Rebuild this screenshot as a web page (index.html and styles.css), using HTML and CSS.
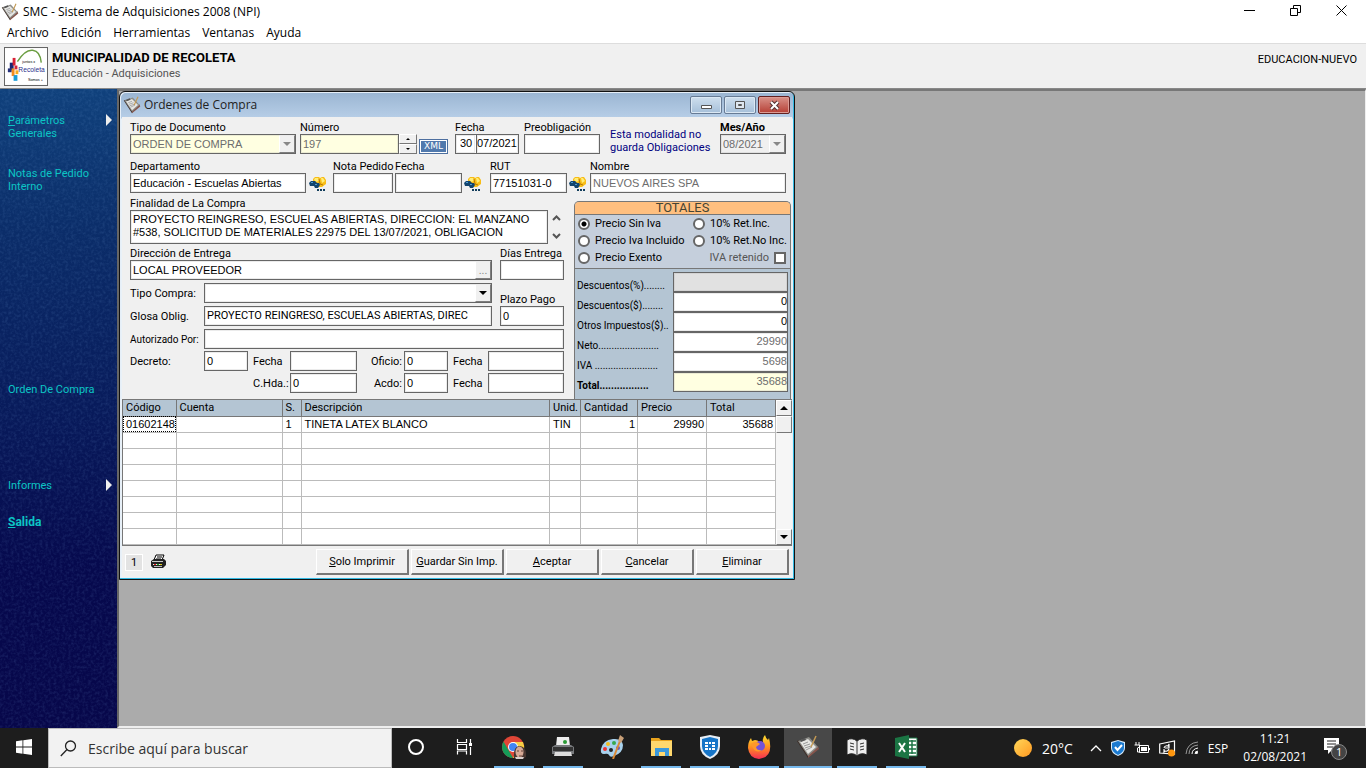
FILE: index.html
```html
<!DOCTYPE html>
<html lang="es">
<head>
<meta charset="utf-8">
<title>SMC - Sistema de Adquisiciones 2008 (NPI)</title>
<link rel="stylesheet" href="styles.css">
</head>
<body>
<svg class="defs" width="0" height="0" aria-hidden="true">
  <defs>
    <linearGradient id="sun" x1="0" y1="0" x2="1" y2="1"><stop offset="0" stop-color="#ffd75a"/><stop offset="1" stop-color="#ff9820"/></linearGradient>
    <linearGradient id="fire" x1="0" y1="0" x2="0" y2="1"><stop offset="0" stop-color="#ffe030"/><stop offset=".5" stop-color="#ff9020"/><stop offset="1" stop-color="#f52c55"/></linearGradient>
    <symbol id="clip" viewBox="0 0 24 24">
      <path d="m1 6 3-1 9 15-1 3z" fill="#3b2c26"/><path d="m12 23 11-9-1-3-10 9z" fill="#85544b"/><path d="M2 6 13 2l9 10-10 9z" fill="#8d8d88"/><path d="M4 7 12 4l8 8-8 7z" fill="#e6e6e3"/>
      <path d="m7 9 5-2m-4 4 6-2m-5 4 6-2m-5 4 6-3" stroke="#999" fill="none"/><path d="m4 5 5-2 1 2-5 2z" fill="#555"/><path d="m20 1-5 11" stroke="#c49a54" stroke-width="1.500"/>
    </symbol>
    <symbol id="find" viewBox="0 0 17 15">
      <path d="M4 3 6 1h4l1 1 2-1h2l2 3v4l-4 3H9L4 6z" fill="#f8bd16"/><path d="M6 2h3l1 2-2 2-3-2zM12 2h2l2 3-3 2z" fill="#ffed78"/><path d="m10 3 1 5 3 1" stroke="#b97903" fill="none"/>
      <path d="M0 7 2 5h4l2 2 2 0 1 2-2 3H6L5 10H1z" fill="#13446d"/><path d="M2 6h2v1H2zm4 2h2v1H6z" fill="#4b9bd0"/><path d="M8 13h2v2H8zm3 0h2v2h-2zm3 0h2v2h-2z" fill="#123d5b"/>
    </symbol>
  </defs>
</svg>
<div class="app">
  <header class="titlebar">
    <svg class="ico18"><use href="#clip"/></svg>
    <h1>SMC - Sistema de Adquisiciones 2008 (NPI)</h1>
    <div class="sysbtns">
      <button aria-label="Minimizar"><svg width="11" height="11"><path d="M0 5.500h11" stroke="#000"/></svg></button>
      <button aria-label="Restaurar"><svg width="11" height="11"><path d="M.5 3.500h7v7h-7zM3.500 3V.5h7v7H8" fill="none" stroke="#000"/></svg></button>
      <button aria-label="Cerrar"><svg width="11" height="11"><path d="m.5.5 10 10m0-10-10 10" stroke="#000"/></svg></button>
    </div>
  </header>
  <nav class="menubar"><a href="#">Archivo</a><a href="#">Edición</a><a href="#">Herramientas</a><a href="#">Ventanas</a><a href="#">Ayuda</a></nav>
  <div class="banner">
    <svg class="logo" viewBox="0 0 44 38" role="img" aria-label="Recoleta">
      <path d="M0 0h44v38H0z" fill="#fff"/><path d="M13 14Q21 1 29 2t9 13" fill="none" stroke="#6b9e42" stroke-width="1.500"/>
      <path d="M5 15h4v8H5z" fill="#1b2473"/><path d="M8 10h3v8H8z" fill="#d82135"/><path d="M3 21h4v4H3z" fill="#26327c"/><path d="M7 21h3v8H7z" fill="#f28b1f"/><path d="M10 18h3v4h-3z" fill="#d7243b"/><path d="M9 28h4v6H9z" fill="#199bd7"/><path d="M11 23h3v4h-3z" fill="#f5ac20"/>
      <text x="18" y="15" font-size="4">juntos x</text><text x="14" y="25" font-size="7" class="logo-name">Recoleta</text><text x="24" y="34" font-size="4">Somos +</text>
    </svg>
    <div class="org"><strong>MUNICIPALIDAD DE RECOLETA</strong><span>Educación - Adquisiciones</span></div>
    <span class="user">EDUCACION-NUEVO</span>
  </div>
  <main class="workspace">
    <nav class="side">
      <svg class="grain" aria-hidden="true"><filter id="noise"><feTurbulence type="fractalNoise" baseFrequency=".35" numOctaves="2" seed="4"/><feColorMatrix values="0 0 0 0 .2  0 0 0 0 .4  0 0 0 0 .75  1.500 0 0 0 -.6"/></filter><rect width="100%" height="100%" filter="url(#noise)"/></svg>
      <a href="#" class="s1"><span><u>P</u>arámetros<br>Generales</span><i class="tri"></i></a>
      <a href="#" class="s2">Notas de Pedido<br>Interno</a>
      <a href="#" class="s3">Orden De Compra</a>
      <a href="#" class="s4"><span>Informes</span><i class="tri"></i></a>
      <a href="#" class="s5"><u>S</u>alida</a>
    </nav>
    <div class="mdi">
      <section class="win">
        <header class="wtitle">
          <svg class="ico18"><use href="#clip"/></svg><h2>Ordenes de Compra</h2>
          <button aria-label="Minimizar ventana"><svg width="13" height="11"><path d="M1.500 5.500h10v3h-10z" fill="#fff" stroke="#555"/></svg></button>
          <button aria-label="Maximizar ventana"><svg width="13" height="11"><path d="M1.500 1.500h9v7h-9z" fill="#dfe7ef" stroke="#555"/><path d="M4.500 4.500h3v1h-3z" fill="none" stroke="#555"/></svg></button>
          <button class="close" aria-label="Cerrar ventana"><svg width="13" height="11"><path d="m3 2 7 7m0-7-7 7" stroke="#533" stroke-width="4"/><path d="m3 2 7 7m0-7-7 7" stroke="#fff" stroke-width="2"/></svg></button>
        </header>
        <form class="form">
          <div class="row r1">
            <div class="f w166"><label for="tipo">Tipo de Documento</label><div class="combo cream"><select id="tipo" disabled><option>ORDEN DE COMPRA</option></select><i class="drop"></i></div></div>
            <div class="f w117"><label for="num">Número</label><div class="spin"><input id="num" class="box cream dim" value="197"><div class="spinb"><button type="button" aria-label="Subir"><i class="up"></i></button><button type="button" aria-label="Bajar"><i class="dn"></i></button></div></div></div>
            <button type="button" class="xml">XML</button>
            <div class="f w64"><label for="dia">Fecha</label><div class="date"><input id="dia" class="box" value="30" aria-label="Día"><input class="box" value="07/2021" aria-label="Mes y año"></div></div>
            <div class="f w76"><label for="pre">Preobligación</label><input id="pre" class="box"></div>
            <p class="note">Esta modalidad no<br>guarda Obligaciones</p>
            <div class="f w66"><label for="mes" class="bold">Mes/Año</label><div class="combo gray"><select id="mes" disabled><option>08/2021</option></select><i class="drop"></i></div></div>
          </div>
          <div class="row r2">
            <div class="f w177"><label for="dep">Departamento</label><input id="dep" class="box" value="Educación - Escuelas Abiertas"></div>
            <button type="button" class="find" aria-label="Buscar departamento"><svg><use href="#find"/></svg></button>
            <div class="f w60"><label for="nota">Nota Pedido</label><input id="nota" class="box"></div>
            <div class="f w68"><label for="fnota">Fecha</label><input id="fnota" class="box"></div>
            <button type="button" class="find" aria-label="Buscar nota"><svg><use href="#find"/></svg></button>
            <div class="f w78"><label for="rut">RUT</label><input id="rut" class="box" value="77151031-0"></div>
            <button type="button" class="find" aria-label="Buscar proveedor"><svg><use href="#find"/></svg></button>
            <div class="f grow"><label for="nom">Nombre</label><input id="nom" class="box dim" value="NUEVOS AIRES SPA"></div>
          </div>
          <div class="split">
            <div class="left">
              <div class="f"><label for="fin">Finalidad de La Compra</label><div class="memo"><textarea id="fin" class="box">PROYECTO REINGRESO, ESCUELAS ABIERTAS, DIRECCION: EL MANZANO
#538, SOLICITUD DE MATERIALES 22975 DEL 13/07/2021, OBLIGACION</textarea><div class="memosb"><svg width="9" height="6"><path d="m1 5 3.500-3.500L8 5" fill="none" stroke="#555" stroke-width="2"/></svg><svg width="9" height="6"><path d="m1 1 3.500 3.500L8 1" fill="none" stroke="#555" stroke-width="2"/></svg></div></div></div>
              <div class="row r3">
                <div class="f w362"><label for="dir">Dirección de Entrega</label><div class="combo"><input id="dir" value="LOCAL PROVEEDOR"><button type="button" class="dots" aria-label="Elegir dirección">...</button></div></div>
                <div class="f w64"><label for="dias">Días Entrega</label><input id="dias" class="box"></div>
              </div>
              <div class="row r4">
                <div class="two">
                  <label for="tc">Tipo Compra:</label><div class="combo"><select id="tc"><option></option></select><i class="drop on"></i></div>
                  <label for="glosa">Glosa Oblig.</label><input id="glosa" class="box narrow" value="PROYECTO REINGRESO, ESCUELAS ABIERTAS, DIREC">
                </div>
                <div class="f w64"><label for="plazo">Plazo Pago</label><input id="plazo" class="box" value="0"></div>
              </div>
              <div class="codes">
                <label for="aut" class="tight">Autorizado Por:</label><input id="aut" class="box all">
                <label for="dec">Decreto:</label><input id="dec" class="box" value="0"><label for="fd" class="in">Fecha</label><input id="fd" class="box"><label for="of" class="end">Oficio:</label><input id="of" class="box" value="0"><label for="fo" class="in">Fecha</label><input id="fo" class="box">
                <label for="ch" class="in third">C.Hda.:</label><input id="ch" class="box" value="0"><label for="ac" class="end">Acdo:</label><input id="ac" class="box" value="0"><label for="fa" class="in">Fecha</label><input id="fa" class="box">
              </div>
            </div>
            <div class="totals">
              <h3>TOTALES</h3>
              <div class="opts">
                <label><input type="radio" name="p" checked>Precio Sin Iva</label><label><input type="radio" name="p">10% Ret.Inc.</label>
                <label><input type="radio" name="p">Precio Iva Incluido</label><label><input type="radio" name="p">10% Ret.No Inc.</label>
                <label><input type="radio" name="p">Precio Exento</label><label class="chk">IVA retenido<input type="checkbox"></label>
              </div>
              <div class="sums">
                <label for="t1">Descuentos(%)........</label><input id="t1" class="box off" disabled>
                <label for="t2">Descuentos($)........</label><input id="t2" class="box" value="0">
                <label for="t3">Otros Impuestos($)..</label><input id="t3" class="box" value="0">
                <label for="t4">Neto.......................</label><input id="t4" class="box dim" value="29990">
                <label for="t5">IVA ........................</label><input id="t5" class="box dim" value="5698">
                <label for="t6" class="bold">Total.................</label><input id="t6" class="box dim cream" value="35688">
              </div>
            </div>
          </div>
          <div class="gridwrap">
            <table>
              <colgroup><col class="c1"><col class="c2"><col class="c3"><col><col class="c5"><col class="c6"><col class="c7"><col class="c8"></colgroup>
              <thead><tr><th>Código</th><th>Cuenta</th><th>S.</th><th>Descripción</th><th>Unid.</th><th>Cantidad</th><th>Precio</th><th>Total</th></tr></thead>
              <tbody>
                <tr><td class="focus">01602148</td><td></td><td>1</td><td>TINETA LATEX BLANCO</td><td>TIN</td><td class="n">1</td><td class="n">29990</td><td class="n">35688</td></tr>
                <tr><td></td><td></td><td></td><td></td><td></td><td></td><td></td><td></td></tr>
                <tr><td></td><td></td><td></td><td></td><td></td><td></td><td></td><td></td></tr>
                <tr><td></td><td></td><td></td><td></td><td></td><td></td><td></td><td></td></tr>
                <tr><td></td><td></td><td></td><td></td><td></td><td></td><td></td><td></td></tr>
                <tr><td></td><td></td><td></td><td></td><td></td><td></td><td></td><td></td></tr>
                <tr><td></td><td></td><td></td><td></td><td></td><td></td><td></td><td></td></tr>
                <tr><td></td><td></td><td></td><td></td><td></td><td></td><td></td><td></td></tr>
              </tbody>
            </table>
            <div class="vsb"><button type="button" aria-label="Subir lista"><i class="up"></i></button><i class="thumb"></i><button type="button" aria-label="Bajar lista"><i class="dn"></i></button></div>
          </div>
          <footer class="actions">
            <span class="count">1</span>
            <svg class="printer" width="17" height="16"><path d="M4 6 6 1h8l-2 5" fill="#fff" stroke="#000"/><path d="M7 3h5M6 5h5" stroke="#000"/><path d="M1 7 4 5h10l2 2v4l-3 3H3l-2-2z" fill="#222"/><path d="M2 7.500h11" stroke="#ccc"/><path d="M3 10.500h9" stroke="#eee"/><path d="M4 10h2v1H4z" fill="#d22"/><path d="M7 10h2v1H7z" fill="#2a2"/><path d="M10 10h2v1h-2z" fill="#dc2"/><path d="M4 12.500h8" stroke="#bbb"/></svg>
            <button type="button"><u>S</u>olo Imprimir</button><button type="button"><u>G</u>uardar Sin Imp.</button><button type="button"><u>A</u>ceptar</button><button type="button"><u>C</u>ancelar</button><button type="button"><u>E</u>liminar</button>
          </footer>
        </form>
      </section>
    </div>
  </main>
  <footer class="taskbar">
    <button class="start" aria-label="Inicio"><svg width="16" height="16"><path d="M0 2.200 6.500 1.300V7.600H0zM7.300 1.200 16 0v7.600H7.300zM0 8.400h6.500v6.300L0 13.800zM7.300 8.400H16V16l-8.700-1.200z" fill="#fff"/></svg></button>
    <label class="search"><svg width="17" height="17"><circle cx="10.500" cy="6" r="5" fill="none" stroke="#222" stroke-width="1.300"/><path d="M7 9.500.8 16" stroke="#222" stroke-width="1.300"/></svg><input type="text" placeholder="Escribe aquí para buscar" aria-label="Buscar"></label>
    <div class="apps">
      <button aria-label="Cortana"><svg viewBox="0 0 24 24"><circle cx="12" cy="12" r="7" fill="none" stroke="#fff" stroke-width="2"/></svg></button>
      <button aria-label="Vista de tareas"><svg viewBox="0 0 24 24"><path d="M4.500 4v3.500h9V4M4.500 19.500V16h9v3.500M4.500 9.500h9v5h-9zM17.500 4v4m0 4v8" fill="none" stroke="#fff" stroke-width="1.200"/><path d="M16 8h3v3h-3z" fill="#fff"/></svg></button>
      <button class="run" aria-label="Chrome"><svg viewBox="0 0 24 24"><circle cx="11" cy="12" r="11" fill="#e04637"/><path d="M1.500 6.500 11 23A11 11 0 0 1 1.500 6.500z" fill="#159b58"/><path d="M11 23 17 10h5a11 11 0 0 1-11 13z" fill="#fc3"/><path d="M11 7h10l1 4H11z" fill="#f8ce45"/><circle cx="11" cy="12" r="5" fill="#fff"/><circle cx="11" cy="12" r="4" fill="#4285f4"/><path d="M12 23q-1-12 6-12 7 1 6 11l-3 2h-6z" fill="#46352f"/><ellipse cx="17.500" cy="17" rx="4" ry="5.500" fill="#d7aa96"/><path d="M15 16h2m2 0h2m-4 5h3" stroke="#65443c"/><path d="M13 22h9l-1 2h-7z" fill="#d8d0cd"/></svg></button>
      <button class="run" aria-label="Impresora"><svg viewBox="0 0 24 24"><path d="M6 2h12l1 9H5z" fill="#eee"/><path d="m1 12 3-2h16l3 2v7H1z" fill="#77797c"/><path d="M2 12h20v4H2z" fill="#333"/><path d="M4 17h16l1 4H3z" fill="#ddd"/><circle cx="14" cy="7" r="2" fill="#2a9a34"/></svg></button>
      <button aria-label="Paint"><svg viewBox="0 0 24 24"><path d="M1 14Q3 5 13 4q9-1 10 6 0 8-9 11-4 2-5-1-1-2-5-1-4 0-3-5z" fill="#a8d1ed"/><circle cx="5" cy="14" r="2" fill="#e33"/><circle cx="8" cy="9" r="2" fill="#f4bd20"/><circle cx="14" cy="8" r="2" fill="#38a94d"/><circle cx="11" cy="15" r="2" fill="#222"/><circle cx="18" cy="13" r="2" fill="#6c55b4"/><path d="m20 6-7 18" stroke="#d98936" stroke-width="2"/><path d="m18 6 2-6 4 3-3 5z" fill="#c9a078"/></svg></button>
      <button class="run" aria-label="Explorador"><svg viewBox="0 0 24 24"><path d="M2 3h8l2 2h11v16H2z" fill="#e9a31d"/><path d="M2 6h21v15H2z" fill="#ffd86e"/><path d="M6 21v-8h14v8h-4v-4h-6v4z" fill="#3c99db"/></svg></button>
      <button class="run" aria-label="FortiClient"><svg viewBox="0 0 24 24"><path d="M2 2 12 0l10 2v9q0 9-10 13Q2 20 2 11z" fill="#e7eef5"/><path d="m4 4 8-2 8 2v7q0 7-8 11-8-4-8-11z" fill="#1675c8"/><path d="M7 7h3v2H7zm4 0h2v2h-2zm3 0h3v2h-3zM7 10h3v2H7zm7 0h3v2h-3zM7 13h3v2H7zm4 0h2v2h-2zm3 0h3v2h-3z" fill="#fff"/></svg></button>
      <button class="run" aria-label="Firefox"><svg viewBox="0 0 24 24"><path d="M1 13Q1 7 4 3l1 3 3-1q3 0 4 2h4q-1-4 2-7 1 4 3 5l1-2q5 19-10 21Q2 23 1 13z" fill="url(#fire)"/><circle cx="13" cy="11" r="5" fill="#7552d7"/><path d="M4 9q5-4 9 0l-4 3q1 4 6 3-7 5-11-6z" fill="#ff982a"/></svg></button>
      <button class="run active" aria-label="SMC"><svg viewBox="0 0 24 24"><use href="#clip"/></svg></button>
      <button class="run" aria-label="Libro"><svg viewBox="0 0 24 24"><path d="M2 5q5-3 10 1 5-4 10-1v15q-6-3-10 1-4-4-10-1z" fill="#eee" stroke="#222"/><path d="M12 6v14M5 8l4 1M5 11l4 1m-4 2 4 1m6-6 4-1m-4 4 4-1m-4 4 4-1" stroke="#333"/></svg></button>
      <button class="run" aria-label="Excel"><svg viewBox="0 0 24 24"><path d="M12 3h11v18H12z" fill="#fff" stroke="#1b7544"/><path d="M14 6h8m-8 4h8m-8 4h8m-8 4h8m-4-13v14" stroke="#1b7544" stroke-width="1.500"/><path d="m1 3 14-3v24L1 21z" fill="#1b7544"/><path d="m5 8 6 9m0-9-6 9" stroke="#fff" stroke-width="2"/></svg></button>
    </div>
    <div class="tray">
      <svg width="19" height="19"><circle cx="9" cy="9" r="9" fill="url(#sun)"/></svg><span class="temp">20°C</span>
      <svg width="12" height="8"><path d="m1 7 5-5 5 5" fill="none" stroke="#fff" stroke-width="1.300"/></svg>
      <svg width="14" height="16"><path d="m0 2 7-2 7 2v6q0 5-7 8-7-3-7-8z" fill="#d9ecfb"/><path d="m1 3 6-2 6 2v5q0 4-6 7-6-3-6-7z" fill="#1b7ad0"/><path d="m4 7 2.500 3L11 5" fill="none" stroke="#fff" stroke-width="2"/></svg>
      <svg width="16" height="14"><path d="M5.500 4.500h9v7h-9zM2 1v3m3-3v3M.5 4h5v2l-2 1v4h2" fill="none" stroke="#fff"/><path d="M7 6h6v4H7zM15 7h1v2h-1z" fill="#fff"/></svg>
      <svg width="17" height="17"><path d="M.7 4 15.500 1v13L.7 13z" fill="none" stroke="#fff" stroke-width="1.200"/><path d="M5 8q1-3 4-2l1-2v4H6m4 1q-1 3-4 2l-1 1V9" fill="none" stroke="#fff" stroke-width="1.200"/><circle cx="12.500" cy="13" r="3.500" fill="#ff960e"/></svg>
      <svg width="14" height="14"><g fill="none" stroke="#999"><path d="M1 13Q2 2 13 1M4 13q0-8 9-9"/><path d="M7 13q0-5 6-6m-3 6q0-2 3-3" stroke="#fff"/></g><circle cx="11.500" cy="11.500" r="1.500" fill="#fff"/></svg>
      <span class="lang">ESP</span><span class="clock">11:21<br>02/08/2021</span>
      <svg width="26" height="26"><path d="M1 3h15v12H9l-4 4v-4H1z" fill="#fff"/><path d="M4 6h9M4 9h9M4 12h6" stroke="#222"/><circle cx="16" cy="17" r="7.500" fill="#444" stroke="#888"/><text x="13" y="21" fill="#fff" font-size="11">1</text></svg>
    </div>
  </footer>
</div>
</body>
</html>
```
FILE: styles.css
```css
* { box-sizing: border-box; }
body { margin: 0; font: 11px/13px Roboto, "Liberation Sans", sans-serif; color: #000; }
button, input, select, textarea { font: inherit; color: inherit; margin: 0; padding: 0; border: 0; border-radius: 0; background: none; min-width: 0; }
.form input, .form select, .form textarea, .form td { font-family: "Liberation Sans", sans-serif; }
.form .narrow { font-family: Roboto, sans-serif; }
h1, h2, h3, p { margin: 0; font-weight: normal; }
a { color: inherit; text-decoration: none; }
.defs { position: absolute; }
.app { display: flex; flex-direction: column; height: 100vh; min-height: 640px; background: #fff; }
.ico18 { width: 18px; height: 18px; flex: none; }

.titlebar { display: flex; align-items: center; height: 23px; padding: 0 2px 0 1px; gap: 4px; }
.titlebar h1, .wtitle h2 { flex: 1; font: 12px/16px "Open Sans", sans-serif; }
.sysbtns { display: flex; }
.sysbtns button { width: 46px; height: 20px; }
.menubar { display: flex; gap: 12px; height: 20px; padding: 2px 7px; font: 12px/16px "Open Sans", sans-serif; }
.banner { display: flex; align-items: flex-start; height: 46px; padding: 3px 9px 2px 4px; gap: 4px; background: #f0f0f0; border-bottom: 1px solid #888; border-top: 1px solid #ddd; }
.logo { width: 44px; height: 39px; border: 1px solid #666; flex: none; font-family: "Liberation Sans", sans-serif; }
.logo-name { fill: #2b2f8c; }
.org { flex: 1; display: flex; flex-direction: column; line-height: 16px; padding-top: 3px; color: #555; }
.org strong { font-size: 13px; color: #000; }
.user { padding-top: 6px; }

.workspace { flex: 1; display: flex; min-height: 0; }
.side { position: relative; width: 117px; flex: none; padding: 25px 5px 0 8px; color: #0cc5c5; background: linear-gradient(#10417c, #0b2d69 22%, #081c5c 48%, #06094d 75%, #07074a); }
.grain { position: absolute; inset: 0; width: 100%; height: 100%; opacity: .2; }
.side a { position: relative; display: flex; justify-content: space-between; align-items: flex-start; }
.side .s2 { margin-top: 27px; }
.side .s3 { margin-top: 190px; }
.side .s4 { margin-top: 83px; }
.side .s5 { margin-top: 24px; display: block; font-weight: bold; font-size: 12px; }
.tri { width: 0; height: 0; border: 6px solid transparent; border-left-color: #eee; border-right: 0; }
.mdi { position: relative; flex: 1; background: #ababab; border-left: 2px solid #666; border-top: 2px solid #777; border-bottom: 2px solid #eee; border-right: 1px solid #eee; }

.win { position: absolute; left: 0; top: 0; width: 676px; padding: 1px 2px 2px; background: linear-gradient(#9ab5d2, #b7cee7 26px, #e9f1f8 27px); border: 1px solid #111; border-radius: 6px 6px 0 0; box-shadow: inset -1px -1px #32b8e0, inset 1px 1px #e5eef7; }
.wtitle { display: flex; align-items: center; height: 24px; padding: 0 2px 0 1px; gap: 3px; color: #222; }
.wtitle button { width: 32px; height: 18px; border: 1px solid #677b95; border-radius: 2px; background: linear-gradient(#cfdfee, #a5bfd9); box-shadow: inset 0 0 0 1px #dbe8f4; display: grid; place-items: center; }
.wtitle button + button { margin-left: -1px; }
.wtitle .close { background: linear-gradient(#d99289, #b63f35); border-color: #632020; box-shadow: inset 0 0 0 1px #dc9b94; }
.form { background: #f0f0f0; padding-top: 4px; }

.f { display: flex; flex-direction: column; }
.f > label { height: 13px; white-space: nowrap; }
.box, .combo { height: 20px; border: 1px solid #666; outline: 1px solid #9993; outline-offset: -2px; background: #fff; }
.box { padding: 0 2px 1px; width: 100%; }
.combo { display: flex; }
.combo select, .combo input { flex: 1; padding: 0 2px; appearance: none; opacity: 1; }
.combo select:disabled, .dim { color: #6d6d6d; }
.cream { background: #ffffe1; }
.gray { background: #f0f0f0; }
.off { background: #e1e1e1; }
.bold { font-weight: bold; }
.drop, .dots, .spinb button, .vsb button, .thumb { display: grid; place-items: center; background: #f0f0f0; border: 1px solid; border-color: #fff #777 #777 #fff; }
.drop, .dots { width: 16px; color: #888; }
.drop::after, .dn::after, .up::after { content: ""; border: 4px solid transparent; border-top-color: currentColor; border-bottom: 0; }
.up::after { border: 4px solid transparent; border-bottom-color: currentColor; border-top: 0; }
.up, .dn { display: grid; }
.on { color: #000; }
.spin { display: flex; }
.spinb { width: 18px; flex: none; display: flex; flex-direction: column; }
.spinb button { height: 10px; }
.spinb i::after { border-width: 2px; border-top-width: 0; }
.spinb .dn::after { border-width: 2px 2px 0; }
.row { display: flex; align-items: flex-end; }
.r1 { padding: 0 6px 0 8px; height: 33px; }
.w166 { width: 166px; margin-right: 4px; }
.w117 { width: 117px; margin-right: 2px; }
.xml { width: 29px; height: 15px; margin-right: 7px; border: 1px solid #4d6f9f; outline: 1px solid #fff; outline-offset: -2px; background: #5079ad; color: #fff; font: 9px/11px "DejaVu Sans", sans-serif; }
.w64 { width: 64px; }
.r1 .w64 { margin-right: 5px; }
.date { display: grid; grid-template-columns: 21px 1fr; }
.date .box { padding: 0 0 2px; }
.date .box:first-child { padding-left: 4px; border-right: 0; }
.w76 { width: 76px; margin-right: 10px; }
.note { color: #000080; flex: 1; }
.w66 { width: 66px; }
.r2 { padding: 0 6px 0 8px; margin-top: 6px; }
.w177 { width: 176px; }
.find { width: 17px; height: 20px; margin: 0 7px 0 3px; }
.find svg { width: 17px; height: 15px; display: block; }
.w60 { width: 60px; margin-right: 2px; }
.w68 { width: 67px; }
.w68 + .find { margin: 0 9px 0 2px; }
.w78 { width: 77px; }
.w78 + .find { margin: 0 4px 0 2px; }
.grow { flex: 1; }
.split { display: grid; grid-template-columns: 452px 1fr; }
.left { padding: 4px 10px 6px 8px; }
.memo { display: flex; }
.memo .box { width: 418px; flex: none; height: 34px; resize: none; overflow: hidden; white-space: pre; display: block; padding: 2px; }
.memosb { display: flex; flex-direction: column; justify-content: space-between; padding: 5px 4px; }
.r3, .r4 { justify-content: space-between; }
.r3 { margin-top: 3px; }
.w362 { width: 362px; }
.r4 { margin-top: 3px; }
.two { display: grid; grid-template-columns: 74px 288px; row-gap: 3px; align-items: center; }
.codes { margin-top: 3px; display: grid; grid-template-columns: 74px 44px 42px 67px 47px 44px 40px 1fr; row-gap: 2px; align-items: center; }
.codes label { white-space: nowrap; }
.codes .tight { font-size: 10px; }
.all { grid-column: 2 / -1; }
.third { grid-column: 3; }
.in { padding-left: 5px; }
.end { text-align: right; padding-right: 2px; }

.totals { margin: 8px 1px 0 0; border: 1px solid #777; border-bottom: 0; border-radius: 5px 5px 0 0; background: #b4c5d3; display: flex; flex-direction: column; overflow: hidden; }
.totals h3 { background: #ffbf7f; border-bottom: 1px solid #777; text-align: center; line-height: 12px; color: #443; }
.opts { background: #c5cfdc; padding: 0 3px 2px; border-bottom: 1px solid #777; display: grid; grid-template-columns: 115px 1fr; grid-auto-rows: 17px; align-items: center; }
.opts label { display: flex; align-items: center; gap: 5px; white-space: nowrap; }
.opts input { appearance: none; width: 12px; height: 12px; border: 2px solid #666; background: #fff; flex: none; }
.opts input[type=radio] { border-radius: 50%; }
.opts input:checked { background: radial-gradient(#000 2px, #fff 3px); }
.opts .chk { justify-content: flex-end; color: #555; padding-right: 1px; }
.sums { display: grid; grid-template-columns: 96px 1fr; padding: 3px 2px 6px 2px; align-items: end; }
.sums label { white-space: nowrap; font-size: 10px; }
.sums .box { text-align: right; padding: 0 0 3px; }

.gridwrap { display: flex; border: 1px solid #777; border-right: 0; background: #fff; height: 147px; overflow: hidden; }
table { flex: 1; width: 0; border-collapse: collapse; table-layout: fixed; height: 145px; }
th, td { height: 16px; padding: 0 2px 0 3px; line-height: 15px; text-align: left; font-weight: normal; border-right: 1px solid #bbb; border-bottom: 1px solid #bbb; white-space: nowrap; }
th { background: #b4c5d3; border-color: #777; }
.form .n { text-align: right; }
.focus { outline: 1px dotted #000; outline-offset: -1px; padding: 0 0 0 3px; }
.c1 { width: 53px; } .c2 { width: 106px; } .c3 { width: 19px; } .c5 { width: 31px; } .c6 { width: 57px; } .c7 { width: 69px; } .c8 { width: 69px; }
.vsb { width: 16px; display: flex; flex-direction: column; background: #f6f6f6; }
.vsb button { height: 16px; }
.thumb { height: 17px; margin-bottom: auto; }

.actions { display: flex; align-items: center; padding: 3px 3px 2px 3px; gap: 2px; }
.count { width: 18px; line-height: 15px; text-align: center; background: #e3e3e3; border: 1px solid #fff; }
.printer { margin: 0 auto 0 5px; }
.actions button { width: 93px; height: 26px; background: #f0f0f0; border: 1px solid #fff; border-right: 2px solid #777; border-bottom: 2px solid #777; }

.taskbar { display: flex; height: 40px; background: #1d1d1d; color: #fff; font-family: "Open Sans", sans-serif; flex: none; }
.start { width: 48px; }
.search { display: flex; align-items: center; gap: 11px; width: 344px; padding-left: 11px; background: #f2f2f2; border: 1px solid #bbb; }
.search input { flex: 1; font-size: 14px; color: #333; }
.search input::placeholder { color: #333; opacity: 1; }
.apps { display: flex; flex: 1; gap: 1px; }
.apps button { width: 48px; display: grid; place-items: center; border-bottom: 2px solid transparent; }
.apps svg { width: 24px; height: 24px; }
.apps .run { background: linear-gradient(#76b9ed, #76b9ed) center bottom / 40px 2px no-repeat border-box; }
.apps .active { background: linear-gradient(#76b9ed, #76b9ed) center bottom / 48px 2px no-repeat border-box #484848; }
.tray { display: flex; align-items: center; gap: 9px; padding-right: 17px; }
.temp { font-size: 14px; margin-right: 8px; }
.lang { font-size: 12px; margin-right: 6px; }
.clock { font-size: 12px; line-height: 18px; text-align: center; margin-right: 7px; }
```
